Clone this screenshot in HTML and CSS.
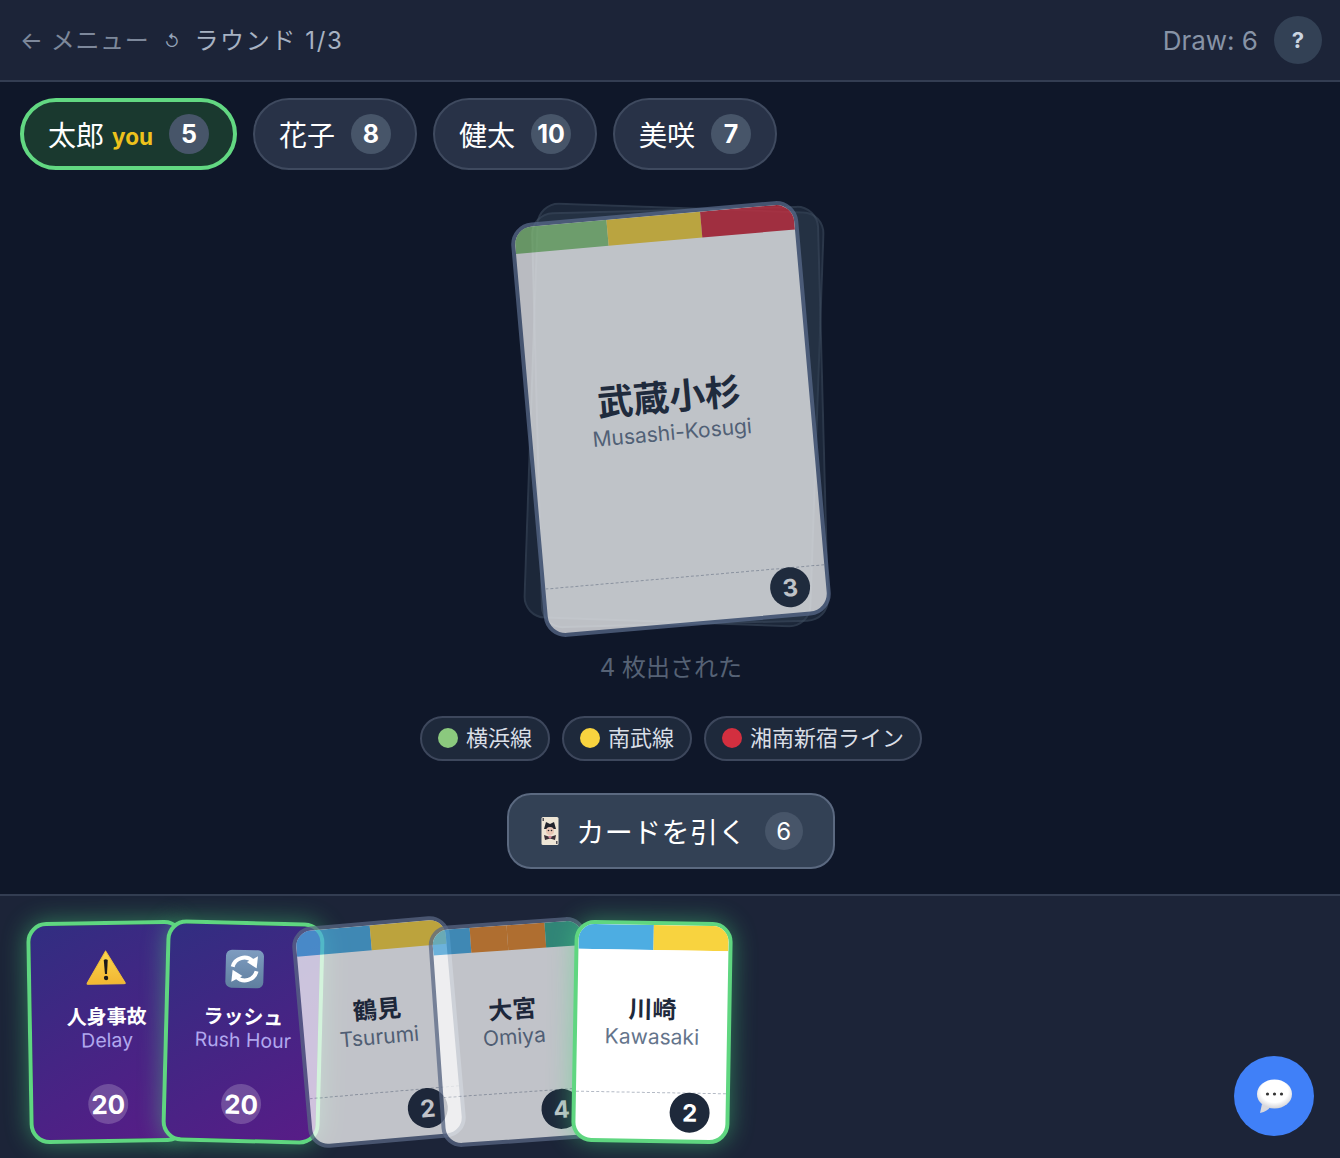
FILE: index.html
```html
<!DOCTYPE html>
<html lang="ja">
<head>
  <meta charset="UTF-8" />
  <title>Train Cards</title>
  <link rel="stylesheet" href="styles.css">
</head>
<body>
  <!-- Top bar -->
  <header class="topbar">
    <div class="topbar-left">
      <span class="back">← メニュー</span>
      <span class="rotate-mark">↺</span>
      <span class="round">ラウンド 1/3</span>
    </div>
    <div class="topbar-right">
      <span class="draw">Draw: 6</span>
      <button class="help">?</button>
    </div>
  </header>

  <!-- Players -->
  <div class="players">
    <div class="player self"><span class="player-name">太郎</span><span class="you">you</span><span class="count">5</span></div>
    <div class="player"><span class="player-name">花子</span><span class="count">8</span></div>
    <div class="player"><span class="player-name">健太</span><span class="count">10</span></div>
    <div class="player"><span class="player-name">美咲</span><span class="count">7</span></div>
  </div>

  <main class="table">
    <div class="pile">
      <div class="ghost ghost-a"></div>
      <div class="ghost ghost-b"></div>
      <div class="card top-card">
        <div class="stripes">
          <span class="green"></span><span class="yellow"></span><span class="red"></span>
        </div>
        <div class="card-body">
          <div class="station">武蔵小杉</div>
          <div class="roman">Musashi-Kosugi</div>
        </div>
        <div class="card-foot"></div>
        <span class="points">3</span>
      </div>
    </div>

    <p class="status">4 枚出された</p>

    <div class="legend">
      <span class="line-tag"><i class="dot green"></i><span class="line-name">横浜線</span></span>
      <span class="line-tag"><i class="dot yellow"></i><span class="line-name">南武線</span></span>
      <span class="line-tag"><i class="dot red"></i><span class="line-name">湘南新宿ライン</span></span>
    </div>

    <button class="draw-btn">
      <svg class="joker" viewBox="0 0 22 30" width="22" height="30">
        <rect x="2.500" y="1" width="17" height="28" rx="1.500" fill="#eee5d5"/>
        <path d="M5 13 L7 6 L11 8 L15 6 L17 13 Z" fill="#22242c"/>
        <circle cx="11" cy="15" r="4" fill="#e9c6b4"/>
        <circle cx="9.500" cy="14.500" r=".8" fill="#22242c"/>
        <circle cx="12.500" cy="14.500" r=".8" fill="#22242c"/>
        <path d="M5 19 L11 21 L17 19 L16 24 L11 22.500 L6 24 Z" fill="#3a3038"/>
        <path d="M11 19.500 L13 21 L11 22.500 L9 21 Z" fill="#d88a9c"/>
        <rect x="3.500" y="2" width="1.500" height="3" fill="#55525a"/>
        <rect x="17" y="25" width="1.500" height="3" fill="#55525a"/>
      </svg>
      <span class="draw-label">カードを引く</span>
      <span class="btn-count">6</span>
    </button>
  </main>

  <!-- Hand -->
  <footer class="hand">
    <div class="card hand-card special playable tilt-1">
      <svg class="special-icon warn-icon" viewBox="0 0 40 36" width="40" height="36">
        <defs>
          <linearGradient id="warn" x1="0" y1="0" x2="0" y2="1">
            <stop offset="0" stop-color="#fbd84f"/>
            <stop offset="1" stop-color="#f2b632"/>
          </linearGradient>
        </defs>
        <path d="M20 2 L39 34 Q39.500 35 38 35 L2 35 Q.5 35 1 34 Z" fill="url(#warn)" stroke="#f2bf3a" stroke-linejoin="round"/>
        <path d="M18 11 Q20 9.500 22 11 L21 25 H19 Z" fill="#1a1a1a"/>
        <circle cx="20" cy="29" r="2.200" fill="#1a1a1a"/>
      </svg>
      <div class="station">人身事故</div>
      <div class="roman">Delay</div>
      <span class="special-points">20</span>
    </div>

    <div class="card hand-card special playable tilt-2">
      <svg class="special-icon" viewBox="0 0 40 40" width="40" height="40">
        <defs>
          <linearGradient id="tile" x1="0" y1="0" x2="0" y2="1">
            <stop offset="0" stop-color="#7e9cc0"/>
            <stop offset="1" stop-color="#5f7f9f"/>
          </linearGradient>
        </defs>
        <rect x="1" y="1" width="38" height="38" rx="6" fill="url(#tile)"/>
        <path d="M8 18 A12 12 0 0 1 28 12" fill="none" stroke="#fff" stroke-width="4"/>
        <path d="M32 19 L33 7 L22 13 Z" fill="#fff"/>
        <path d="M32 22 A12 12 0 0 1 12 28" fill="none" stroke="#fff" stroke-width="4"/>
        <path d="M8 21 L7 33 L18 27 Z" fill="#fff"/>
      </svg>
      <div class="station">ラッシュ</div>
      <div class="roman">Rush Hour</div>
      <span class="special-points">20</span>
    </div>

    <div class="card hand-card dimmed tilt-3">
      <div class="stripes"><span class="blue"></span><span class="yellow"></span></div>
      <div class="card-body">
        <div class="station">鶴見</div>
        <div class="roman">Tsurumi</div>
      </div>
      <div class="card-foot"></div>
      <span class="points">2</span>
    </div>

    <div class="card hand-card dimmed tilt-4">
      <div class="stripes"><span class="blue"></span><span class="orange"></span><span class="orange"></span><span class="teal"></span></div>
      <div class="card-body">
        <div class="station">大宮</div>
        <div class="roman">Omiya</div>
      </div>
      <div class="card-foot"></div>
      <span class="points">4</span>
    </div>

    <div class="card hand-card playable tilt-5">
      <div class="stripes"><span class="blue"></span><span class="yellow"></span></div>
      <div class="card-body">
        <div class="station">川崎</div>
        <div class="roman">Kawasaki</div>
      </div>
      <div class="card-foot"></div>
      <span class="points">2</span>
    </div>
  </footer>

  <button class="chat">
    <svg viewBox="0 0 40 40" width="40" height="40">
      <defs>
        <radialGradient id="bubble" cx=".5" cy=".4" r=".65">
          <stop offset=".6" stop-color="#ffffff"/>
          <stop offset="1" stop-color="#c9c9cf"/>
        </radialGradient>
      </defs>
      <path d="M8 28 L6 37 Q14 35 16 31 Z" fill="#d8d8de"/>
      <ellipse cx="20.500" cy="18" rx="17.500" ry="14.500" fill="url(#bubble)"/>
      <circle cx="13.500" cy="18" r="1.600" fill="#333"/>
      <circle cx="20.500" cy="18" r="1.600" fill="#333"/>
      <circle cx="27.500" cy="18" r="1.600" fill="#333"/>
    </svg>
  </button>
</body>
</html>
```

FILE: styles.css
```css
* {
  box-sizing: border-box;
}

body {
  margin: 0;
  height: 100vh;
  overflow: hidden;
  display: flex;
  flex-direction: column;
  background: #0f1729;
  color: #fff;
  font-family: Inter, "Noto Sans CJK JP", sans-serif;
}

button {
  font-family: inherit;
  cursor: pointer;
}

/* Top bar */
.topbar {
  height: 82px;
  flex-shrink: 0;
  display: flex;
  align-items: center;
  justify-content: space-between;
  padding: 0 18px 0 20px;
  background: #1c2438;
  border-bottom: 2px solid #333d52;
}

.topbar-left {
  display: flex;
  align-items: center;
  margin-bottom: 3px;
  font-size: 24px;
}

.back {
  color: #7d889b;
  letter-spacing: 0.6px;
}

.rotate-mark {
  margin: 5px 0 0 15px;
  color: #94a3b8;
  font-size: 16px;
}

.round {
  margin-left: 15px;
  color: #a7b2c2;
  letter-spacing: 1.6px;
}

.topbar-right {
  display: flex;
  align-items: center;
  gap: 16px;
}

.draw {
  color: #8793a6;
  font-size: 26px;
}

.help {
  width: 48px;
  height: 48px;
  border: none;
  border-radius: 50%;
  background: #334155;
  color: #cbd5e1;
  font-size: 22px;
  font-weight: 700;
}

/* Players */
.players {
  display: flex;
  gap: 16px;
  padding: 16px 20px 0;
  flex-shrink: 0;
}

.player {
  height: 72px;
  display: flex;
  align-items: center;
  padding: 0 24px;
  border: 2px solid #3f4a5f;
  border-radius: 36px;
  background: #283247;
}

.player.self {
  padding: 0 24px;
  border: 4px solid #62d882;
  background: #1a392f;
}

.player-name {
  font-size: 28px;
}

.you {
  margin: 4px 0 0 8px;
  color: #eec21c;
  font-size: 22.5px;
  font-weight: 700;
}

.count {
  min-width: 40px;
  height: 40px;
  margin-left: 16px;
  display: flex;
  align-items: center;
  justify-content: center;
  border-radius: 50%;
  background: #475569;
  font-size: 25px;
  font-weight: 700;
}

/* Table */
.table {
  flex: 1;
  display: flex;
  flex-direction: column;
  align-items: center;
  padding-left: 2px;
}

.pile {
  display: grid;
  justify-items: center;
  align-items: center;
  width: 340px;
  height: 442px;
  margin-top: 28px;
}

.pile > * {
  grid-area: 1 / 1;
}

.ghost {
  width: 288px;
  height: 416px;
  border-radius: 22px;
  background: rgba(51, 65, 85, 0.38);
  border: 2px solid rgba(71, 85, 105, 0.35);
}

.ghost-a {
  transform: translate(3px, -4px) rotate(2deg);
}

.ghost-b {
  transform: translate(9px, -2px) rotate(-1.5deg);
}

.status {
  margin: 14px 0 0;
  height: 28px;
  line-height: 28px;
  color: #566275;
  font-size: 24px;
}

.legend {
  display: flex;
  gap: 12px;
  margin-top: 34px;
}

.line-tag {
  height: 45px;
  display: flex;
  align-items: center;
  gap: 8px;
  padding: 0 16px 2px;
  border: 2px solid #3d475c;
  border-radius: 23px;
  background: #1e293b;
  color: #d9dee6;
  font-size: 22px;
}

.line-name {
  padding-bottom: 4px;
}

.dot {
  width: 20px;
  height: 20px;
  border-radius: 50%;
}

.draw-btn {
  width: 328px;
  height: 76px;
  margin-top: 32px;
  display: flex;
  align-items: center;
  justify-content: center;
  gap: 15px;
  border: 2px solid #5b6980;
  border-radius: 24px;
  background: #334155;
  color: #fff;
  font-size: 28px;
}

.draw-label {
  letter-spacing: 0.4px;
}

.btn-count {
  width: 38px;
  height: 38px;
  margin-left: 3px;
  display: flex;
  align-items: center;
  justify-content: center;
  border-radius: 50%;
  background: #475569;
  font-size: 24px;
}

/* Cards */
.card {
  position: relative;
  display: flex;
  flex-direction: column;
  overflow: hidden;
  background: #fff;
  color: #1e293b;
  border: 4px solid #475774;
}

.stripes {
  display: flex;
  flex-shrink: 0;
}

.stripes span {
  flex: 1;
}

.green { background: #8bc97e; }
.yellow { background: #f8d33f; }
.red { background: #d32f3f; }
.blue { background: #4dade2; }
.orange { background: #e68a2e; }
.teal { background: #3aa98f; }

.card-body {
  flex: 1;
  display: flex;
  flex-direction: column;
  align-items: center;
  justify-content: center;
  padding-top: 3px;
}

.card-foot {
  flex-shrink: 0;
  border-top: 1px dashed #b4bac5;
}

.station {
  font-weight: 700;
  line-height: 1.2;
}

.roman {
  color: #64748b;
  font-size: 21px;
  line-height: 1.2;
}

.points {
  position: absolute;
  width: 40px;
  height: 40px;
  display: flex;
  align-items: center;
  justify-content: center;
  border-radius: 50%;
  background: #1e293b;
  color: #fff;
  font-size: 24px;
  font-weight: 700;
}

.top-card {
  width: 288px;
  height: 416px;
  border-radius: 22px;
  border-color: #5b6d8e;
  opacity: 0.71;
  transform: rotate(-5deg);
}

.top-card .stripes {
  height: 26px;
}

.top-card .station {
  font-size: 36px;
}

.top-card .card-foot {
  height: 46px;
}

.top-card .points {
  right: 16px;
  bottom: 6px;
}

/* Hand */
.hand {
  height: 264px;
  flex-shrink: 0;
  display: flex;
  align-items: flex-start;
  padding: 25px 0 0 27px;
  background: #1c2438;
  border-top: 2px solid #333d52;
}

.hand-card {
  width: 158px;
  height: 222px;
  margin-right: -22px;
  border-radius: 20px;
}

.hand-card .stripes {
  height: 25px;
}

.hand-card .station {
  font-size: 24px;
}

.hand-card .card-foot {
  height: 47px;
}

.hand-card .points {
  right: 13px;
  bottom: 7px;
}

.hand-card.tilt-5 .points {
  right: 16px;
}

.playable {
  border-color: #5fd680;
  overflow: visible;
  box-shadow: 0 0 24px rgba(74, 222, 128, 0.48);
}

.playable .stripes {
  overflow: hidden;
  border-radius: 16px 16px 0 0;
}

.dimmed {
  opacity: 0.73;
  border-color: #5a6885;
}

.special {
  align-items: center;
  padding-top: 24px;
  background: linear-gradient(150deg, #312e81, #581c87);
  color: #fff;
}

.special-icon {
  flex-shrink: 0;
  margin-bottom: 16px;
}

.warn-icon {
  margin-bottom: 20px;
}

.special .roman {
  color: #b1a8ee;
  font-size: 19.5px;
}

.hand-card.special .station {
  font-size: 20px;
}

.special-points {
  position: absolute;
  bottom: 15px;
  width: 40px;
  height: 40px;
  display: flex;
  align-items: center;
  justify-content: center;
  border-radius: 50%;
  background: rgba(255, 255, 255, 0.2);
  font-size: 26px;
  font-weight: 700;
}

.tilt-1 { transform: translateX(1px) rotate(-1deg); }
.tilt-2 { transform: translateX(1px) rotate(1.5deg); }
.tilt-3 { transform: translateX(1px) rotate(-5deg); }
.tilt-4 { transform: rotate(-4deg); }
.tilt-5 { transform: translateX(2px) rotate(1deg); }

/* Chat */
.chat {
  position: fixed;
  right: 26px;
  bottom: 22px;
  width: 80px;
  height: 80px;
  display: flex;
  align-items: center;
  justify-content: center;
  padding: 0;
  border: none;
  border-radius: 50%;
  background: #4080f8;
}
```
